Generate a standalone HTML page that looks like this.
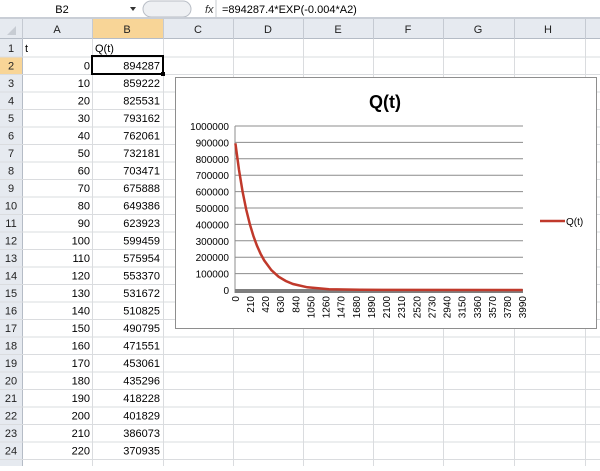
<!DOCTYPE html>
<html><head><style>
body{margin:0;width:600px;height:466px;overflow:hidden;background:#fff;font-family:"Liberation Sans",sans-serif;}
svg text{font-family:"Liberation Sans",sans-serif;}
</style></head><body>
<svg width="600" height="466" xmlns="http://www.w3.org/2000/svg">
<!-- formula bar -->
<rect x="0" y="0" width="600" height="18" fill="#fff"/>
<text x="62" y="13" font-size="11" text-anchor="middle" fill="#000">B2</text>
<path d="M130 7 L136 7 L133 11 Z" fill="#333"/>
<rect x="143" y="1" width="48" height="16" rx="8" fill="#eef0f3" stroke="#b9bec6"/>
<text x="205" y="13" font-size="11" font-style="italic" font-family="Liberation Serif" fill="#333">fx</text>
<line x1="216" y1="0" x2="216" y2="18" stroke="#c8ccd2"/>
<text x="222" y="13" font-size="11" fill="#000">=894287.4*EXP(-0.004*A2)</text>
<rect x="0" y="17" width="600" height="2" fill="#c9ced6"/>
<!-- header row -->
<rect x="0" y="19" width="600" height="20" fill="#e6eaf0"/>
<rect x="92" y="19" width="71" height="20" fill="#f8d597"/>
<line x1="0" y1="38.5" x2="600" y2="38.5" stroke="#b5bcc6"/>
<path d="M16 35 L16 26 L7 35Z" fill="#c7ccd3"/>
<g font-size="11" text-anchor="middle" fill="#222">
<text x="57" y="33">A</text><text x="127" y="33">B</text><text x="198" y="33">C</text><text x="268" y="33">D</text><text x="338" y="33">E</text><text x="408" y="33">F</text><text x="478" y="33">G</text><text x="548" y="33">H</text>
</g>
<g stroke="#c5cad2">
<line x1="22.5" y1="19" x2="22.5" y2="39"/><line x1="92.5" y1="19" x2="92.5" y2="39"/><line x1="163.5" y1="19" x2="163.5" y2="39"/><line x1="233.5" y1="19" x2="233.5" y2="39"/><line x1="303.5" y1="19" x2="303.5" y2="39"/><line x1="373.5" y1="19" x2="373.5" y2="39"/><line x1="443.5" y1="19" x2="443.5" y2="39"/><line x1="514.5" y1="19" x2="514.5" y2="39"/><line x1="585.5" y1="19" x2="585.5" y2="39"/>
</g>
<!-- row header column -->
<rect x="0" y="39" width="22" height="427" fill="#e6eaf0"/>
<rect x="0" y="56.5" width="22" height="17.5" fill="#f8d597"/>
<line x1="22.5" y1="39" x2="22.5" y2="466" stroke="#b5bcc6"/>
<!-- grid -->
<g stroke="#dadcdf">
<line x1="92.5" y1="39" x2="92.5" y2="466"/><line x1="163.5" y1="39" x2="163.5" y2="466"/><line x1="233.5" y1="39" x2="233.5" y2="466"/><line x1="303.5" y1="39" x2="303.5" y2="466"/><line x1="373.5" y1="39" x2="373.5" y2="466"/><line x1="443.5" y1="39" x2="443.5" y2="466"/><line x1="514.5" y1="39" x2="514.5" y2="466"/><line x1="585.5" y1="39" x2="585.5" y2="466"/>
</g>
<g id="rows" stroke="#dadcdf"></g>
<g id="rowtext" font-size="11"></g>
<!-- selected B2 -->
<rect x="92" y="56" width="71" height="18" fill="none" stroke="#000" stroke-width="2"/>
<rect x="161" y="72" width="4" height="4" fill="#000"/>
<!-- chart -->
<rect x="175.5" y="77.5" width="421" height="251" fill="#fff" stroke="#8e8e8e"/>
<text x="385" y="108" font-size="18" font-weight="bold" text-anchor="middle" fill="#000">Q(t)</text>
<g stroke="#8c8c8c" stroke-width="1">
<line x1="235" y1="126" x2="523" y2="126"/><line x1="235" y1="142.4" x2="523" y2="142.4"/><line x1="235" y1="158.8" x2="523" y2="158.8"/><line x1="235" y1="175.2" x2="523" y2="175.2"/><line x1="235" y1="191.6" x2="523" y2="191.6"/><line x1="235" y1="208" x2="523" y2="208"/><line x1="235" y1="224.4" x2="523" y2="224.4"/><line x1="235" y1="240.8" x2="523" y2="240.8"/><line x1="235" y1="257.2" x2="523" y2="257.2"/><line x1="235" y1="273.6" x2="523" y2="273.6"/>
<line x1="235" y1="126" x2="235" y2="293"/>
</g>
<rect x="235" y="289" width="288" height="4" fill="#7f7f7f"/>
<g font-size="10" text-anchor="end" fill="#000">
<text x="229" y="130">1000000</text><text x="229" y="146.4">900000</text><text x="229" y="162.8">800000</text><text x="229" y="179.2">700000</text><text x="229" y="195.6">600000</text><text x="229" y="212">500000</text><text x="229" y="228.4">400000</text><text x="229" y="244.8">300000</text><text x="229" y="261.2">200000</text><text x="229" y="277.6">100000</text><text x="229" y="294">0</text>
</g>
<polyline fill="none" stroke="#c0392b" stroke-width="2.5" points="235.4,143.3 239,169.9 242.6,191.7 246.2,209.5 249.8,224.1 253.4,236 257,245.8 260.6,253.8 264.2,260.4 271.4,270.2 278.6,276.7 285.8,281 293,284 307.4,287.3 329,289.2 360,289.8 522.6,290"/>
<g id="xl" font-size="10" fill="#000"></g>
<line x1="540" y1="221" x2="565" y2="221" stroke="#c0392b" stroke-width="2.5"/>
<text x="566" y="225" font-size="10" fill="#000">Q(t)</text>
</svg>
<script>
var ns="http://www.w3.org/2000/svg";
var rows=document.getElementById("rows"),rt=document.getElementById("rowtext");
function t(x,y,s,a,c){var e=document.createElementNS(ns,"text");e.setAttribute("x",x);e.setAttribute("y",y);if(a)e.setAttribute("text-anchor",a);e.setAttribute("fill",c||"#000");e.textContent=s;rt.appendChild(e);}
var B=[894287,859222,825531,793162,762061,732181,703471,675888,649386,623923,599459,575954,553370,531672,510825,490795,471551,453061,435296,418228,401829,386073,370935];
for(var i=0;i<25;i++){var y=39+i*17.5+17.5;var l=document.createElementNS(ns,"line");l.setAttribute("x1",0);l.setAttribute("x2",600);l.setAttribute("y1",y+0.5);l.setAttribute("y2",y+0.5);rows.appendChild(l);
 if(i<24){var cy=y-4.5;t(11,cy,String(i+1),"middle","#222");
 if(i==0){t(25,cy,"t");t(95,cy,"Q(t)");}else{t(90,cy,String((i-1)*10),"end");t(160,cy,String(B[i-1]),"end");}}}
var xl=document.getElementById("xl");
for(var k=0;k<20;k++){var x=235+(k*21+0.5)*0.72+3.5;var e=document.createElementNS(ns,"text");e.setAttribute("transform","translate("+x+",296) rotate(-90)");e.setAttribute("text-anchor","end");e.textContent=String(k*210);xl.appendChild(e);}
</script>
</body></html>
